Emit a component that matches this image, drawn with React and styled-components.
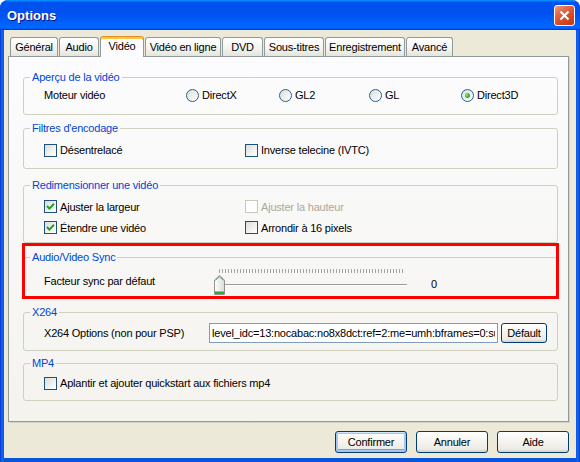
import React from 'react';
import styled, { createGlobalStyle } from 'styled-components';

const GlobalStyle = createGlobalStyle`
  html, body {
    margin: 0;
    padding: 0;
    background: #ffffff;
  }
  body {
    font-family: "Liberation Sans", Arial, sans-serif;
    font-size: 11px;
    letter-spacing: -0.2px;
    color: #000;
  }
`;

const Window = styled.div`
  width: 580px;
  height: 462px;
  box-sizing: border-box;
  display: flex;
  flex-direction: column;
  background: linear-gradient(90deg, #0831d9 0px, #166aee 2px, #0855dd 4px, #0855dd 576px, #166aee 578px, #0831d9 580px);
  border-radius: 8px 8px 0 0;
  overflow: hidden;
`;

const TitleBar = styled.div`
  height: 30px;
  flex: none;
  display: flex;
  align-items: center;
  justify-content: space-between;
  padding: 0 5px 0 7px;
  background: linear-gradient(180deg, #0997ff, #0053ee 8%, #0050ee 40%, #0066ff 88%, #0066ff 93%, #005bff 95%, #003dd7 96%, #003dd7);
`;

const Title = styled.span`
  font-family: "Liberation Sans", Arial, sans-serif;
  font-weight: bold;
  font-size: 13px;
  letter-spacing: 0;
  color: #ffffff;
  text-shadow: 1px 1px #0f1089;
`;

const CloseButton = styled.div`
  width: 21px;
  height: 21px;
  box-sizing: border-box;
  border: 1px solid #ffffff;
  border-radius: 3px;
  background: linear-gradient(145deg, #f2a085 0%, #e5694a 30%, #d84b28 60%, #c4370f 100%);
  display: flex;
  align-items: center;
  justify-content: center;
`;

const Body = styled.div`
  flex: 1;
  margin: 0 4px 4px;
  padding: 6px 7px 5px 4px;
  background: #ece9d8;
  display: flex;
  flex-direction: column;
`;

const TabStrip = styled.div`
  display: flex;
  align-items: flex-end;
  height: 21px;
  margin-bottom: -1px;
  padding-left: 2px;
  position: relative;
  z-index: 1;
`;

const Tab = styled.div`
  width: ${(p) => p.$w}px;
  height: ${(p) => (p.$active ? 21 : 19)}px;
  margin: 0 1px ${(p) => (p.$active ? 0 : 1)}px 0;
  box-sizing: border-box;
  display: flex;
  align-items: center;
  justify-content: center;
  padding-bottom: ${(p) => (p.$active ? 2 : 0)}px;
  border: 1px solid #919b9c;
  border-bottom: 0;
  border-radius: 3px 3px 0 0;
  background: ${(p) => (p.$active ? '#fcfcfe' : 'linear-gradient(180deg, #ffffff 0%, #f3f3ef 60%, #e6e4dc 100%)')};
  ${(p) => p.$active && `
    border-top: 1px solid #e68b2c;
    box-shadow: inset 0 2px 0 #ffc83c;
  `}
  white-space: nowrap;
`;

const Panel = styled.div`
  height: 366px;
  box-sizing: border-box;
  border: 1px solid #919b9c;
  background: linear-gradient(180deg, #fcfcfe 0%, #f4f3ee 100%);
  box-shadow: 1px 1px 0 #d6d3c6;
  padding: 14px 10px 0 14px;
  display: flex;
  flex-direction: column;
`;

const Group = styled.fieldset`
  margin: ${(p) => p.$mt || 0}px 0 0;
  padding: 0;
  min-width: 0;
  border: 1px solid #d0d0bf;
  border-radius: 3px;
`;

const Legend = styled.legend`
  margin-left: 6px;
  padding: 0 2px;
  line-height: 13px;
  font-size: 11px;
  color: #0046d5;
`;

const GroupBody = styled.div`
  padding: ${(p) => p.$pt}px 0 ${(p) => p.$pb}px 20px;
`;

const Row = styled.div`
  display: grid;
  grid-template-columns: ${(p) => p.$cols};
  align-items: center;
  height: ${(p) => p.$h}px;
`;

const Highlight = styled.div`
  position: relative;
  margin-top: ${(p) => p.$mt}px;
  &::after {
    content: '';
    position: absolute;
    top: -8px;
    left: -1px;
    right: -1px;
    bottom: -1px;
    border: 3px solid #ff0000;
    pointer-events: none;
  }
`;

const Choice = styled.label`
  display: flex;
  align-items: center;
  gap: 3px;
  color: ${(p) => (p.$disabled ? '#aca899' : '#000')};
  white-space: nowrap;
`;

const Box = styled.span`
  width: 13px;
  height: 13px;
  flex: none;
  box-sizing: border-box;
  border: 1px solid ${(p) => (p.$disabled ? '#cac8bb' : '#1c5180')};
  background: ${(p) => (p.$disabled ? '#ffffff' : 'linear-gradient(135deg, #dcdcd7 0%, #f6f6f3 70%, #ffffff 100%)')};
  display: flex;
  align-items: center;
  justify-content: center;
`;

const Round = styled(Box)`
  border-radius: 50%;
  border-color: #2c5d8f;
`;

const Dot = styled.span`
  width: 5px;
  height: 5px;
  border-radius: 50%;
  background: radial-gradient(circle at 35% 35%, #8ae88a 0%, #35c035 45%, #139e13 100%);
`;

const Text = styled.span`
  padding-top: ${(p) => p.$pt || 0}px;
  white-space: nowrap;
`;

const TextField = styled.input`
  width: 289px;
  height: 20px;
  box-sizing: border-box;
  margin: 0;
  padding: 0 2px;
  border: 1px solid #7f9db9;
  background: #ffffff;
  font-family: "Liberation Sans", Arial, sans-serif;
  font-size: 11px;
  letter-spacing: -0.2px;
  color: #000;
  outline: none;
`;

const Button = styled.button`
  width: ${(p) => p.$w}px;
  height: ${(p) => p.$h}px;
  box-sizing: border-box;
  margin: 0;
  padding: 0;
  border: 1px solid #003c74;
  border-radius: 3px;
  background: linear-gradient(180deg, #ffffff 0%, #f5f4f0 45%, #ecebe6 85%, #d6d0c5 100%);
  font-family: "Liberation Sans", Arial, sans-serif;
  font-size: 11px;
  letter-spacing: -0.2px;
  color: #000;
  ${(p) => p.$default && `
    box-shadow: inset 0 1px 0 #cee7ff, inset 0 0 0 2px #a9c4ee, inset 0 -1px 0 2px #7da2ce;
  `}
`;

const Footer = styled.div`
  display: flex;
  justify-content: flex-end;
  gap: 9px;
  margin-top: 9px;
`;

const CheckMark = () => (
  <svg width="9" height="9" viewBox="0 0 9 9">
    <path d="M1 4 L3.4 6.6 L8 1.8" fill="none" stroke="#21a121" strokeWidth="2" />
  </svg>
);

const Checkbox = ({ checked, disabled, children }) => (
  <Choice $disabled={disabled}>
    <Box $disabled={disabled}>{checked && <CheckMark />}</Box>
    {children}
  </Choice>
);

const Radio = ({ checked, children }) => (
  <Choice>
    <Round>{checked && <Dot />}</Round>
    {children}
  </Choice>
);

const SliderArt = () => (
  <svg width="200" height="30" viewBox="0 0 200 30" style={{ display: 'block' }}>
    <defs>
      <linearGradient id="thumbFill" x1="0" y1="0" x2="1" y2="0">
        <stop offset="0" stopColor="#ffffff" />
        <stop offset="1" stopColor="#dcdcd6" />
      </linearGradient>
    </defs>
    {Array.from({ length: 62 }, (_, i) => (
      <rect key={i} x={7 + i * 3} y={3} width={1} height={4} fill="#a7a6a0" />
    ))}
    <rect x="10" y="18" width="185" height="1" fill="#9d9c99" />
    <rect x="10" y="19" width="185" height="1" fill="#ffffff" />
    <path d="M2.5 14 L7.5 9.5 L12.5 14 L12.5 28.5 L2.5 28.5 Z" fill="url(#thumbFill)" stroke="#8c9399" />
    <path d="M3.5 14.3 L7.5 10.8 L11.5 14.3" fill="none" stroke="#45c545" />
    <rect x="3" y="25" width="9" height="3" fill="#2faa2f" />
    <rect x="3" y="25" width="9" height="1" fill="#6fd86f" />
  </svg>
);

const tabs = [
  { label: 'Général', w: 48 },
  { label: 'Audio', w: 40 },
  { label: 'Vidéo', w: 44, active: true },
  { label: 'Vidéo en ligne', w: 76 },
  { label: 'DVD', w: 41 },
  { label: 'Sous-titres', w: 60 },
  { label: 'Enregistrement', w: 80 },
  { label: 'Avancé', w: 47 },
];

export default function App() {
  return (
    <>
      <GlobalStyle />
      <Window>
        <TitleBar>
          <Title>Options</Title>
          <CloseButton>
            <svg width="11" height="11" viewBox="0 0 11 11">
              <path d="M1.5 1.5 L9.5 9.5 M9.5 1.5 L1.5 9.5" stroke="#ffffff" strokeWidth="2" />
            </svg>
          </CloseButton>
        </TitleBar>
        <Body>
          <TabStrip>
            {tabs.map((t) => (
              <Tab key={t.label} $w={t.w} $active={t.active}>
                {t.label}
              </Tab>
            ))}
          </TabStrip>
          <Panel>
            <Group>
              <Legend>Aperçu de la vidéo</Legend>
              <GroupBody $pt={1} $pb={9}>
                <Row $cols="142px 93px 90px 92px auto" $h={20}>
                  <Text>Moteur vidéo</Text>
                  <Radio>DirectX</Radio>
                  <Radio>GL2</Radio>
                  <Radio>GL</Radio>
                  <Radio checked>Direct3D</Radio>
                </Row>
              </GroupBody>
            </Group>

            <Group $mt={7}>
              <Legend>Filtres d'encodage</Legend>
              <GroupBody $pt={5} $pb={8}>
                <Row $cols="201px auto" $h={20}>
                  <Checkbox>Désentrelacé</Checkbox>
                  <Checkbox>Inverse telecine (IVTC)</Checkbox>
                </Row>
              </GroupBody>
            </Group>

            <Group $mt={10}>
              <Legend>Redimensionner une vidéo</Legend>
              <GroupBody $pt={4} $pb={4}>
                <Row $cols="201px auto" $h={21}>
                  <Checkbox checked>Ajuster la largeur</Checkbox>
                  <Checkbox disabled>Ajuster la hauteur</Checkbox>
                </Row>
                <Row $cols="201px auto" $h={21}>
                  <Checkbox checked>Étendre une vidéo</Checkbox>
                  <Checkbox>Arrondir à 16 pixels</Checkbox>
                </Row>
              </GroupBody>
            </Group>

            <Highlight $mt={8}>
              <Group>
                <Legend>Audio/Video Sync</Legend>
                <GroupBody $pt={2} $pb={1}>
                  <Row $cols="168px 200px auto" $h={30}>
                    <Text>Facteur sync par défaut</Text>
                    <SliderArt />
                    <Text $pt={6} style={{ paddingLeft: 19 }}>0</Text>
                  </Row>
                </GroupBody>
              </Group>
            </Highlight>

            <Group $mt={8}>
              <Legend>X264</Legend>
              <GroupBody $pt={4} $pb={7}>
                <Row $cols="165px 292px auto" $h={20}>
                  <Text>X264 Options (non pour PSP)</Text>
                  <TextField
                    readOnly
                    value="level_idc=13:nocabac:no8x8dct:ref=2:me=umh:bframes=0:subme=6:8x8dct=0"
                  />
                  <Button $w={46} $h={20}>Défault</Button>
                </Row>
              </GroupBody>
            </Group>

            <Group $mt={6}>
              <Legend>MP4</Legend>
              <GroupBody $pt={3} $pb={7}>
                <Row $cols="auto" $h={20}>
                  <Checkbox>Aplantir et ajouter quickstart aux fichiers mp4</Checkbox>
                </Row>
              </GroupBody>
            </Group>
          </Panel>
          <Footer>
            <Button $w={72} $h={22} $default>Confirmer</Button>
            <Button $w={72} $h={22}>Annuler</Button>
            <Button $w={72} $h={22}>Aide</Button>
          </Footer>
        </Body>
      </Window>
    </>
  );
}
